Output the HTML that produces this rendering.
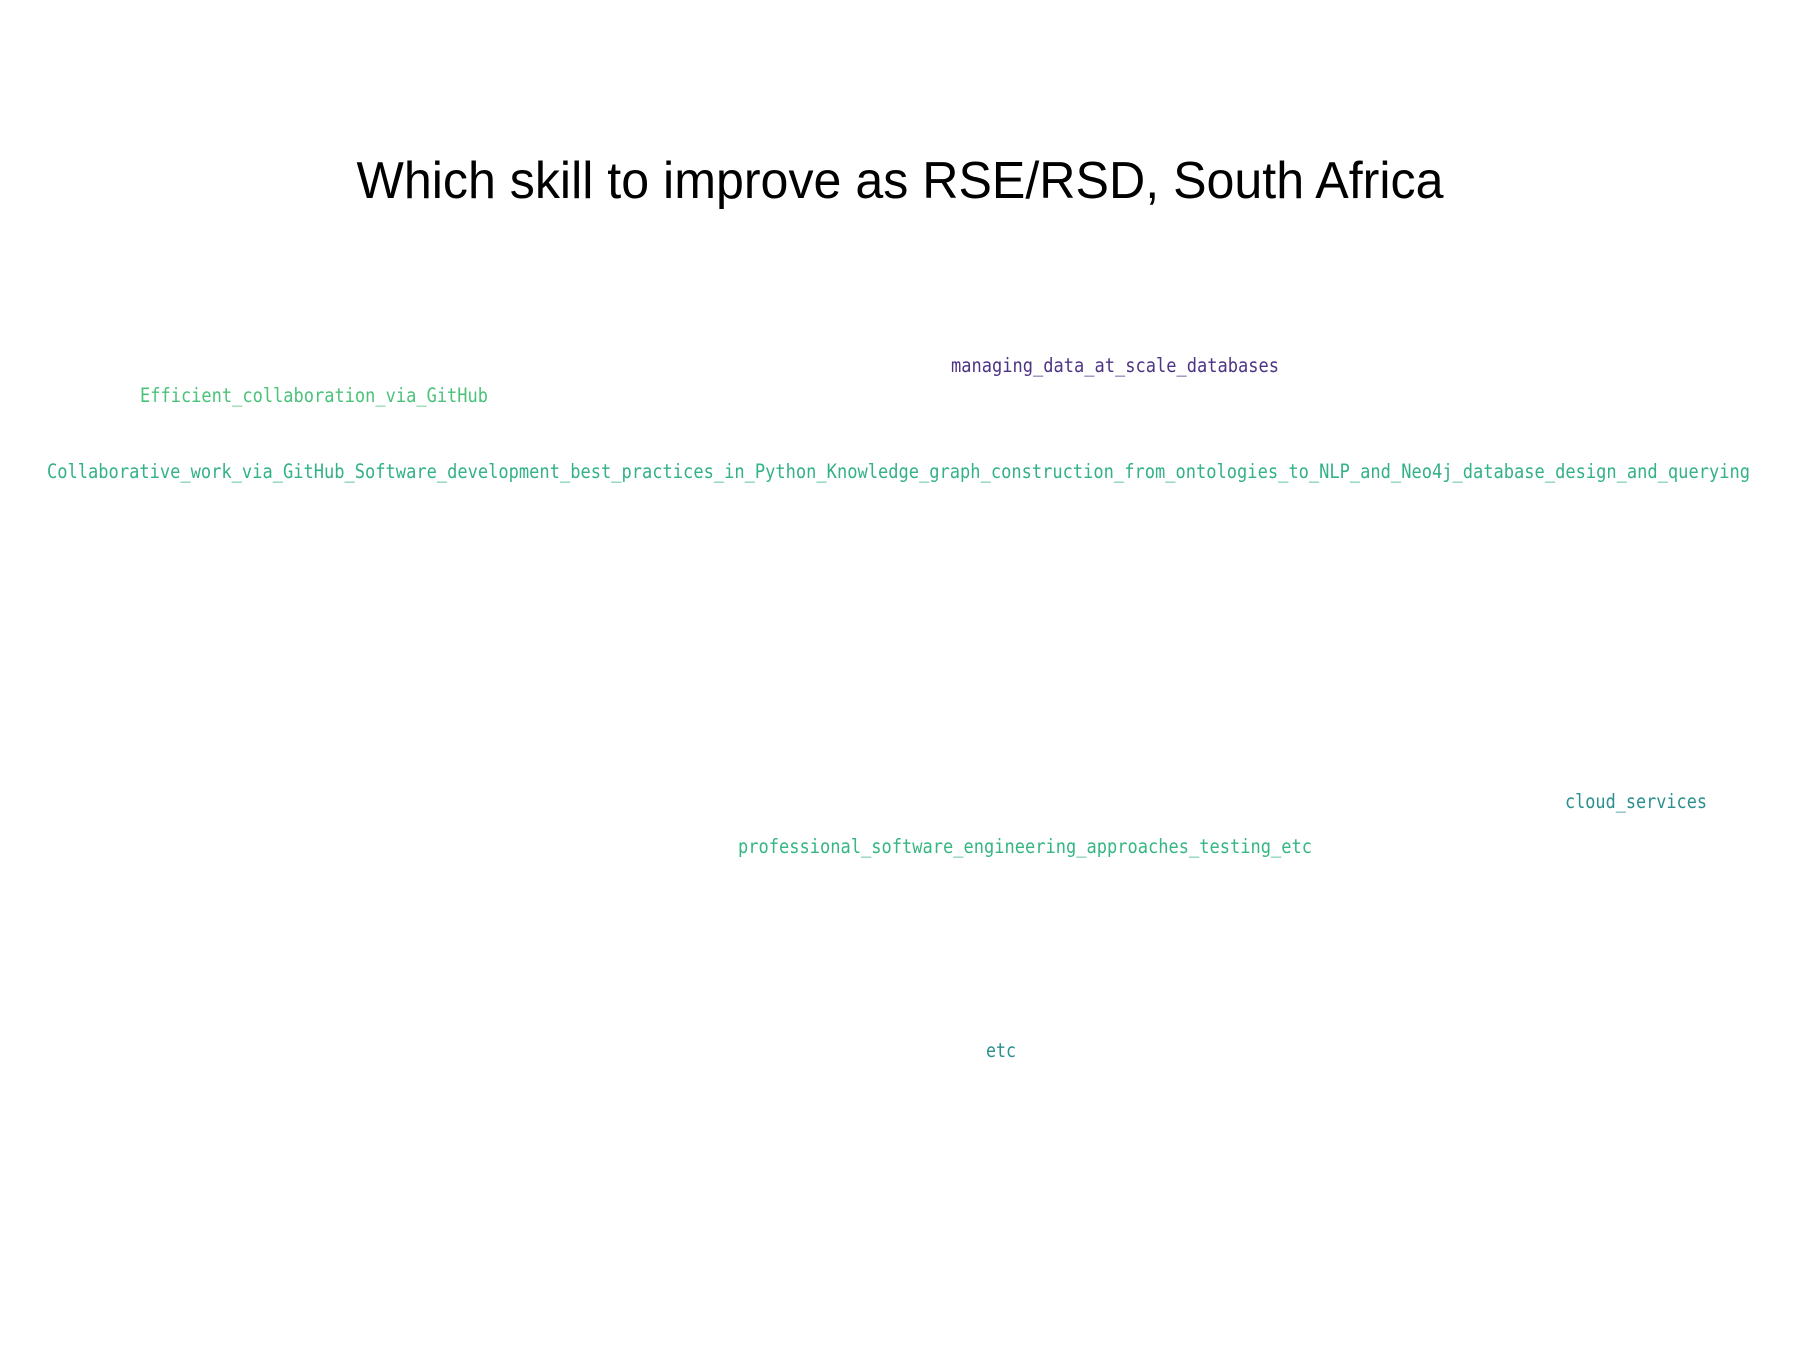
<!DOCTYPE html>
<html><head><meta charset="utf-8"><style>
html,body{margin:0;padding:0;background:#fff;width:1800px;height:1350px;overflow:hidden}
</style></head><body>
<svg width="1800" height="1350" xmlns="http://www.w3.org/2000/svg">
<rect width="1800" height="1350" fill="#fff"/>
<text x="900" y="198" text-anchor="middle" font-family="Liberation Sans, sans-serif" font-size="52" fill="#000" textLength="1087" lengthAdjust="spacingAndGlyphs">Which skill to improve as RSE/RSD, South Africa</text>
<g font-family="DejaVu Sans Mono, Liberation Mono, monospace" font-size="19.5" font-weight="500">
<text x="951" y="372" fill="#4e3484" textLength="328" lengthAdjust="spacingAndGlyphs">managing_data_at_scale_databases</text>
<text x="140" y="402" fill="#4ac27a" textLength="348" lengthAdjust="spacingAndGlyphs">Efficient_collaboration_via_GitHub</text>
<text x="47" y="478" fill="#33b187" textLength="1703" lengthAdjust="spacingAndGlyphs">Collaborative_work_via_GitHub_Software_development_best_practices_in_Python_Knowledge_graph_construction_from_ontologies_to_NLP_and_Neo4j_database_design_and_querying</text>
<text x="1565" y="808" fill="#2a8f8e" textLength="142" lengthAdjust="spacingAndGlyphs">cloud_services</text>
<text x="738" y="853" fill="#36b682" textLength="574" lengthAdjust="spacingAndGlyphs">professional_software_engineering_approaches_testing_etc</text>
<text x="986" y="1057" fill="#2a8f8e" textLength="30" lengthAdjust="spacingAndGlyphs">etc</text>
</g>
</svg>
</body></html>
